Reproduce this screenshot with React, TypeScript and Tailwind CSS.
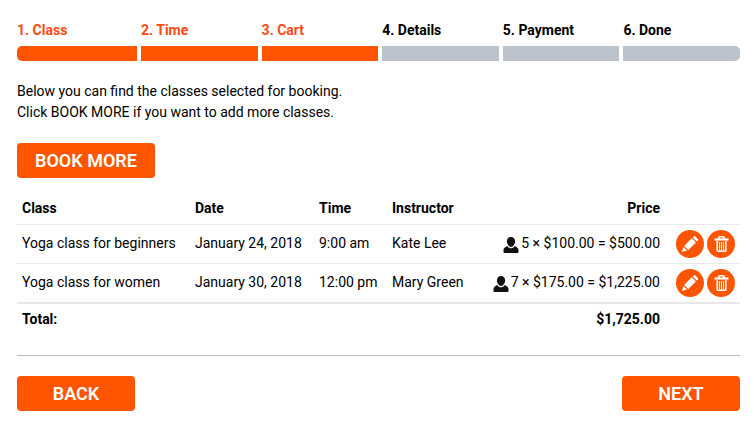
const STEPS = ["Class", "Time", "Cart", "Details", "Payment", "Done"];
const CURRENT_STEP = 3;

type CartItem = {
  id: number;
  name: string;
  date: string;
  time: string;
  instructor: string;
  seats: number;
  price: number;
};

const ITEMS: CartItem[] = [
  { id: 1, name: "Yoga class for beginners", date: "January 24, 2018", time: "9:00 am", instructor: "Kate Lee", seats: 5, price: 100 },
  { id: 2, name: "Yoga class for women", date: "January 30, 2018", time: "12:00 pm", instructor: "Mary Green", seats: 7, price: 175 },
];

const money = (n: number) => "$" + n.toLocaleString("en-US", { minimumFractionDigits: 2 });

function PersonIcon() {
  return (
    <svg viewBox="0 0 16 16" className="mb-px size-4 shrink-0" fill="#111" aria-hidden="true">
      <path d="M8 0C5.400 0 3.900 1.900 3.900 4.500c0 2.300 1.700 5.500 4.100 5.500s4.100-3.200 4.100-5.500C12.100 1.900 10.600 0 8 0z" />
      <path d="M4.300 8.900C3 9.900.5 10.500.5 13v2c0 .6.400 1 1 1h13c.6 0 1-.4 1-1v-2c0-2.500-2.500-3.100-3.800-4.100C10.800 10.300 9.500 11.300 8 11.300S5.200 10.300 4.300 8.900z" />
    </svg>
  );
}

function PencilIcon() {
  return (
    <svg viewBox="0 0 28 28" className="size-7" fill="#fff" aria-hidden="true">
      <path d="M5.900 22.100l1.500-5.200 3.700 3.700z" />
      <path d="M8.100 15.900l7.600-7.600 4.200 4.200-7.600 7.600z" />
      <path d="M16.600 7.400l1-1c.5-.5 1.200-.5 1.700 0l2.500 2.500c.5.500.5 1.200 0 1.700l-1 1z" />
    </svg>
  );
}

function TrashIcon() {
  return (
    <svg viewBox="0 0 28 28" className="size-7" fill="none" stroke="#fff" aria-hidden="true">
      <path d="M11.800 9V7.800c0-.6.300-1 1-1h3.400c.7 0 1 .4 1 1V9" strokeWidth="1.600" />
      <path d="M7.500 9.500h14" strokeWidth="2.200" />
      <path d="M10.200 11v9.700c0 .4.200.6.600.6h7.400c.4 0 .6-.2.600-.6V11" strokeWidth="1.600" />
      <path d="M12.500 12v8.500M14.500 12v8.500M16.500 12v8.500" strokeWidth="1.100" />
    </svg>
  );
}

const bigButton = "h-[35px] rounded bg-[#ff5500] text-lg font-semibold text-white hover:bg-[#e64d00]";
const roundButton = "size-7 rounded-full bg-[#ff5500] hover:bg-[#e64d00]";

export default function App() {
  const total = ITEMS.reduce((sum, i) => sum + i.seats * i.price, 0);

  return (
    <main className="bg-white pt-5 pr-3.5 pb-6 pl-[17px] font-[Roboto,sans-serif] text-sm leading-[21px] text-black">
      {/* Progress */}
      <ol className="flex gap-1">
        {STEPS.map((step, i) => (
          <li key={step} className="group flex-1 first:w-[120px] first:flex-none">
            <span className={`block font-bold ${i < CURRENT_STEP ? "text-[#ff4a12]" : ""}`}>
              {i + 1}. {step}
            </span>
            <div
              className={`mt-[5px] h-[15px] group-first:rounded-l-[5px] group-last:rounded-r-[5px] ${
                i < CURRENT_STEP ? "bg-[#ff5500]" : "bg-[#bdc3cb]"
              }`}
            />
          </li>
        ))}
      </ol>

      <p className="mt-5">
        Below you can find the classes selected for booking.
        <br />
        Click BOOK MORE if you want to add more classes.
      </p>

      <button type="button" className={`mt-5 block px-[18px] ${bigButton}`}>
        BOOK MORE
      </button>

      {/* Cart */}
      <table className="mt-[15px] w-full whitespace-nowrap">
        <thead>
          <tr className="border-b border-[#e8e8e8] text-left">
            <th className="w-[173px] p-[5px]">Class</th>
            <th className="w-[124px] p-[5px]">Date</th>
            <th className="w-[73px] p-[5px]">Time</th>
            <th className="p-[5px]">Instructor</th>
            <th className="p-[5px] text-right">Price</th>
            <td className="w-[75px]" />
          </tr>
        </thead>
        <tbody>
          {ITEMS.map((item) => (
            <tr key={item.id} className="border-b border-[#e8e8e8]">
              <td className="px-[5px] pt-1 pb-1.5">{item.name}</td>
              <td className="px-[5px] pt-1 pb-1.5">{item.date}</td>
              <td className="px-[5px] pt-1 pb-1.5">{item.time}</td>
              <td className="px-[5px] pt-1 pb-1.5">{item.instructor}</td>
              <td className="px-[5px] pt-1 pb-1.5">
                <div className="flex items-end justify-end gap-0.5">
                  <PersonIcon />
                  {item.seats} × {money(item.price)} = {money(item.seats * item.price)}
                </div>
              </td>
              <td className="p-[5px]">
                <div className="flex justify-end gap-[3px]">
                  <button type="button" aria-label="Edit" className={roundButton}>
                    <PencilIcon />
                  </button>
                  <button type="button" aria-label="Delete" className={roundButton}>
                    <TrashIcon />
                  </button>
                </div>
              </td>
            </tr>
          ))}
        </tbody>
        <tfoot>
          <tr className="border-t-2 border-[#e8e8e8] font-bold">
            <td className="p-[5px]" colSpan={4}>Total:</td>
            <td className="p-[5px] text-right">{money(total)}</td>
            <td />
          </tr>
        </tfoot>
      </table>

      <div className="mt-5 flex justify-between border-t border-[#bbb] pt-5">
        <button type="button" className={`w-[118px] ${bigButton}`}>BACK</button>
        <button type="button" className={`w-[118px] ${bigButton}`}>NEXT</button>
      </div>
    </main>
  );
}
